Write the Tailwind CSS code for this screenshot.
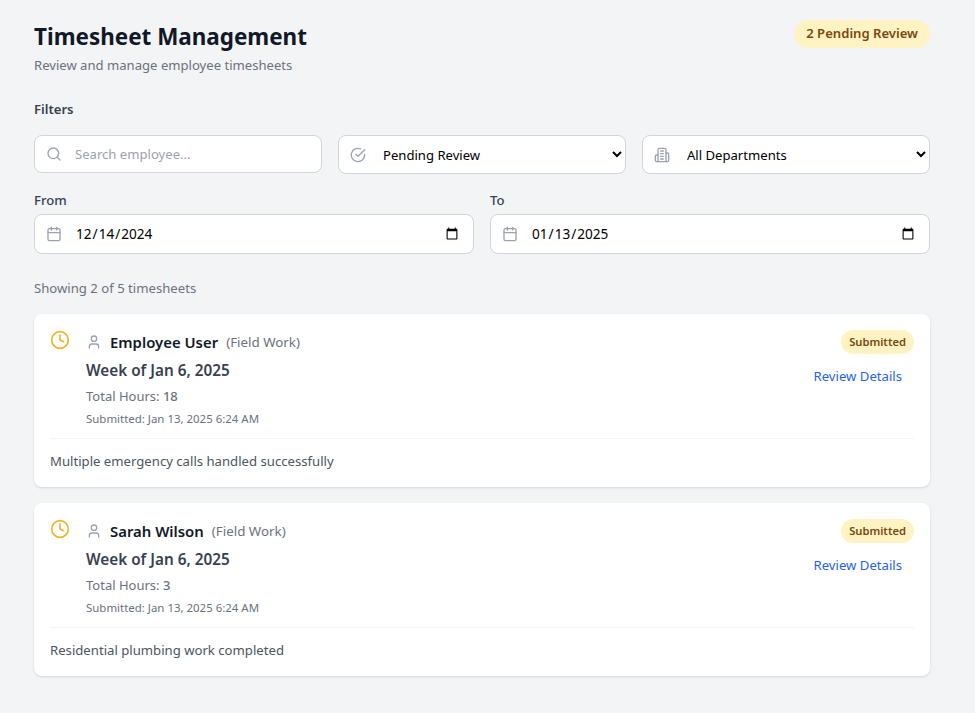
<!DOCTYPE html>
<html lang="en">
<head>
<meta charset="utf-8">
<title>Timesheet Management</title>
<script src="https://cdn.jsdelivr.net/npm/@tailwindcss/browser@4"></script>
</head>
<body class="bg-[#f3f4f6] font-['Noto_Sans',sans-serif] h-[713px] overflow-hidden">
<main class="w-[896px] ml-[34px] pt-5">
  <header class="flex justify-between items-start">
    <div>
      <h1 class="text-[22.45px] font-bold text-[#111827] leading-8 mt-[1px]">Timesheet Management</h1>
      <p class="text-[13.1px] text-[#6b7280] leading-5 mt-[2px]">Review and manage employee timesheets</p>
    </div>
    <span class="rounded-full bg-[#fff3c4] text-[#78490e] text-[13.1px] font-semibold px-3 h-7 flex items-center">2 Pending Review</span>
  </header>
  <h2 class="text-[13.1px] font-semibold text-[#374151] leading-5 mt-[24px]">Filters</h2>
  <section class="grid grid-cols-3 gap-4 mt-[16px]">
    <div class="relative h-[38px]">
      <svg class="absolute left-3 top-[11px] w-4 h-4 text-[#9ca3af]" viewBox="0 0 24 24" fill="none" stroke="currentColor" stroke-width="2" stroke-linecap="round" stroke-linejoin="round"><circle cx="11" cy="11" r="8"/><path d="m21 21-4.3-4.3"/></svg>
      <input type="text" placeholder="Search employee..." class="w-full h-full bg-white border border-[#d1d5db] rounded-lg pl-10 pr-3 text-[13.1px] text-[#111827] placeholder:text-[#9ca3af]">
    </div>
    <div class="relative h-[39px]">
      <svg class="absolute left-3 top-[12px] w-4 h-4 text-[#9ca3af]" viewBox="0 0 24 24" fill="none" stroke="currentColor" stroke-width="2" stroke-linecap="round" stroke-linejoin="round"><path d="M22 11.08V12a10 10 0 1 1-5.93-9.14"/><path d="m9 11 3 3L22 4"/></svg>
      <select class="w-full h-full bg-white border border-[#d1d5db] rounded-lg pl-10 pr-3 text-[13.1px] text-black appearance-auto"><option>Pending Review</option></select>
    </div>
    <div class="relative h-[39px]">
      <svg class="absolute left-3 top-[12px] w-4 h-4 text-[#9ca3af]" viewBox="0 0 24 24" fill="none" stroke="currentColor" stroke-width="2" stroke-linecap="round" stroke-linejoin="round"><path d="M6 22V4a2 2 0 0 1 2-2h8a2 2 0 0 1 2 2v18Z"/><path d="M6 12H4a2 2 0 0 0-2 2v6a2 2 0 0 0 2 2h2"/><path d="M18 9h2a2 2 0 0 1 2 2v9a2 2 0 0 1-2 2h-2"/><path d="M10 6h4"/><path d="M10 10h4"/><path d="M10 14h4"/><path d="M10 18h4"/></svg>
      <select class="w-full h-full bg-white border border-[#d1d5db] rounded-lg pl-10 pr-3 text-[13.1px] text-black appearance-auto"><option>All Departments</option></select>
    </div>
  </section>
  <section class="grid grid-cols-2 gap-4 mt-[16px]">
    <div>
      <label class="block text-[13.15px] font-medium text-[#374151] leading-5 mb-[4px]">From</label>
      <div class="relative h-10">
        <svg class="absolute left-3 top-3 w-4 h-4 text-[#9ca3af]" viewBox="0 0 24 24" fill="none" stroke="currentColor" stroke-width="2" stroke-linecap="round" stroke-linejoin="round"><path d="M8 2v4"/><path d="M16 2v4"/><rect width="18" height="18" x="3" y="4" rx="2"/><path d="M3 10h18"/></svg>
        <input type="date" value="2024-12-14" class="w-full h-full bg-white border border-[#d1d5db] rounded-lg pl-10 pr-3 text-[13.6px] text-black">
      </div>
    </div>
    <div>
      <label class="block text-[13.15px] font-medium text-[#374151] leading-5 mb-[4px]">To</label>
      <div class="relative h-10">
        <svg class="absolute left-3 top-3 w-4 h-4 text-[#9ca3af]" viewBox="0 0 24 24" fill="none" stroke="currentColor" stroke-width="2" stroke-linecap="round" stroke-linejoin="round"><path d="M8 2v4"/><path d="M16 2v4"/><rect width="18" height="18" x="3" y="4" rx="2"/><path d="M3 10h18"/></svg>
        <input type="date" value="2025-01-13" class="w-full h-full bg-white border border-[#d1d5db] rounded-lg pl-10 pr-3 text-[13.6px] text-black">
      </div>
    </div>
  </section>
  <p class="text-[13.15px] text-[#6b7280] leading-5 mt-[24px]">Showing 2 of 5 timesheets</p>
  <section class="flex flex-col gap-4 mt-[16px]">
    <article class="bg-white rounded-lg shadow h-[173px] px-4 pt-4">
      <div class="flex justify-between h-[109px] border-b border-[#f3f4f6]">
        <div class="flex gap-4">
          <svg class="w-5 h-5 text-[#f0b429]" viewBox="0 0 24 24" fill="none" stroke="currentColor" stroke-width="2" stroke-linecap="round" stroke-linejoin="round"><circle cx="12" cy="12" r="10"/><path d="M12 6v6l4 2"/></svg>
          <div>
            <div class="flex items-center leading-6">
              <svg class="w-4 h-4 text-[#9ca3af] mr-2" viewBox="0 0 24 24" fill="none" stroke="currentColor" stroke-width="2" stroke-linecap="round" stroke-linejoin="round"><path d="M19 21v-2a4 4 0 0 0-4-4H9a4 4 0 0 0-4 4v2"/><circle cx="12" cy="7" r="4"/></svg>
              <span class="text-[14.9px] font-semibold text-[#111827]">Employee User</span>
              <span class="text-[13.35px] text-[#6b7280] ml-2">(Field Work)</span>
            </div>
            <h3 class="text-[15.3px] font-semibold text-[#374151] leading-6 mt-[4px]">Week of Jan 6, 2025</h3>
            <p class="text-[13px] text-[#6b7280] leading-5 mt-[4px]">Total Hours: <span class="font-medium">18</span></p>
            <p class="text-[11.45px] text-[#6b7280] leading-4 mt-[5px]">Submitted: Jan 13, 2025 6:24 AM</p>
          </div>
        </div>
        <div class="flex flex-col items-end">
          <span class="rounded-full bg-[#fff3c4] text-[#78490e] text-[11.2px] font-semibold px-2 h-6 flex items-center">Submitted</span>
          <a href="#" class="text-[13.15px] text-[#2563eb] leading-5 mt-[12px] mr-3">Review Details</a>
        </div>
      </div>
      <p class="text-[13.15px] text-[#4b5563] leading-5 mt-[12px]">Multiple emergency calls handled successfully</p>
    </article>
    <article class="bg-white rounded-lg shadow h-[173px] px-4 pt-4">
      <div class="flex justify-between h-[109px] border-b border-[#f3f4f6]">
        <div class="flex gap-4">
          <svg class="w-5 h-5 text-[#f0b429]" viewBox="0 0 24 24" fill="none" stroke="currentColor" stroke-width="2" stroke-linecap="round" stroke-linejoin="round"><circle cx="12" cy="12" r="10"/><path d="M12 6v6l4 2"/></svg>
          <div>
            <div class="flex items-center leading-6">
              <svg class="w-4 h-4 text-[#9ca3af] mr-2" viewBox="0 0 24 24" fill="none" stroke="currentColor" stroke-width="2" stroke-linecap="round" stroke-linejoin="round"><path d="M19 21v-2a4 4 0 0 0-4-4H9a4 4 0 0 0-4 4v2"/><circle cx="12" cy="7" r="4"/></svg>
              <span class="text-[14.9px] font-semibold text-[#111827]">Sarah Wilson</span>
              <span class="text-[13.35px] text-[#6b7280] ml-2">(Field Work)</span>
            </div>
            <h3 class="text-[15.3px] font-semibold text-[#374151] leading-6 mt-[4px]">Week of Jan 6, 2025</h3>
            <p class="text-[13px] text-[#6b7280] leading-5 mt-[4px]">Total Hours: <span class="font-medium">3</span></p>
            <p class="text-[11.45px] text-[#6b7280] leading-4 mt-[5px]">Submitted: Jan 13, 2025 6:24 AM</p>
          </div>
        </div>
        <div class="flex flex-col items-end">
          <span class="rounded-full bg-[#fff3c4] text-[#78490e] text-[11.2px] font-semibold px-2 h-6 flex items-center">Submitted</span>
          <a href="#" class="text-[13.15px] text-[#2563eb] leading-5 mt-[12px] mr-3">Review Details</a>
        </div>
      </div>
      <p class="text-[13.15px] text-[#4b5563] leading-5 mt-[12px]">Residential plumbing work completed</p>
    </article>
  </section>
</main>
</body>
</html>
